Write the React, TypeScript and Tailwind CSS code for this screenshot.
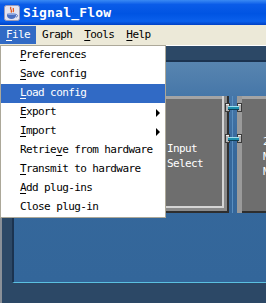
import React from "react";

interface MenuItem {
  label: React.ReactNode;
  sub?: boolean;
  active?: boolean;
}

const mono = "font-['DejaVu_Sans_Mono',monospace] text-[11px] tracking-[-0.6px]";

const U = ({ c }: { c: string }) => (
  <span className="underline underline-offset-[2px] decoration-1">{c}</span>
);

const fileItems: MenuItem[] = [
  { label: <><U c="P" />references</> },
  { label: <><U c="S" />ave config</> },
  { label: <><U c="L" />oad config</>, active: true },
  { label: <><U c="E" />xport</>, sub: true },
  { label: <><U c="I" />mport</>, sub: true },
  { label: <>Retrie<U c="v" />e from hardware</> },
  { label: <><U c="T" />ransmit to hardware</> },
  { label: <><U c="A" />dd plug-ins</> },
  { label: <>Close plug-in</> },
];

const JavaIcon = () => (
  <svg width="16" height="16" viewBox="0 0 16 16">
    <rect x="0.5" y="0.5" width="15" height="15" rx="2" fill="#e4e4f0" stroke="#9a9ab8" />
    <path d="M7 2 C5 4 9 5 7 7.5 M9.5 3 C8.5 4.5 10.5 5 9 7" stroke="#e0561c" strokeWidth="1.3" fill="none" />
    <path d="M3 9 h9 v1.5 c0 2 -2 3.5 -4.5 3.5 s-4.5 -1.5 -4.5 -3.5 z" fill="#4a6fc0" />
    <path d="M12 9.5 c2 0 2 2.5 0 2.5" stroke="#4a6fc0" strokeWidth="1" fill="none" />
    <ellipse cx="7.5" cy="9" rx="4.5" ry="1" fill="#8fa8e0" />
  </svg>
);

// little pin pair joining two blocks
const Connector = ({ top }: { top: number }) => (
  <svg
    width="17"
    height="9"
    viewBox="0 0 17 9"
    className="absolute left-[211px]"
    style={{ top }}
  >
    <rect x="0.5" y="0.5" width="4" height="8" fill="#b4b4b4" stroke="#3a3a3a" />
    <rect x="12.5" y="0.5" width="4" height="8" fill="#b4b4b4" stroke="#3a3a3a" />
    <rect x="1" y="1" width="3" height="1" fill="#f0f0f0" />
    <rect x="13" y="1" width="3" height="1" fill="#f0f0f0" />
    <rect x="3" y="3" width="11" height="3" fill="#1e8fae" />
    <rect x="3" y="3" width="11" height="1" fill="#9fe0ee" />
    <rect x="3" y="6" width="11" height="1" fill="#0c3f56" />
  </svg>
);

export default function App() {
  return (
    <div className="relative w-[266px] h-[303px] overflow-hidden flex flex-col bg-[#2c4866]">
      {/* title bar */}
      <div className="h-[25px] flex items-center pl-[4px] gap-[3px] bg-[linear-gradient(#3a8af4_0%,#0a5ce8_18%,#0054e3_55%,#0a60ec_85%,#0040c4_100%)]">
        <JavaIcon />
        <span className="font-['DejaVu_Sans_Mono',monospace] font-bold text-[13px] tracking-[0.2px] text-white">
          Signal_Flow
        </span>
      </div>

      {/* menu bar */}
      <div className={`h-[21px] flex items-start pt-[1px] bg-[#ece9d8] border-b border-white text-black ${mono}`}>
        <div className="h-[18px] px-[6px] flex items-center bg-[#316ac5] text-white">
          <U c="F" />ile
        </div>
        <div className="h-[18px] px-[6px] flex items-center">Graph</div>
        <div className="h-[18px] px-[6px] flex items-center">
          <U c="T" />ools
        </div>
        <div className="h-[18px] px-[6px] flex items-center">
          <U c="H" />elp
        </div>
      </div>

      {/* workspace */}
      <div className="flex-1 flex flex-col border-l-2 border-[#8a9098] pl-[10px] pt-[14px] pb-[20px]">
        <div className="relative flex-1 border-l-2 border-t-2 border-[#1b3350] border-b border-b-[#5bc0e0] bg-[linear-gradient(#5885b0_0px,#4576a8_36px,#36689b_90px,#33669a_100%)]">
          {/* block 1 */}
          <div className="absolute left-[116px] top-[34px] w-[99px] h-[117px] bg-[#6e6e6e] shadow-[inset_-2px_-2px_0_#2e2e2e,inset_-5px_-5px_0_#8a8a8a,inset_-7px_-7px_0_#d4d4d4,inset_0_3px_0_#a4a4a4]">
            <div className={`pl-[37px] pt-[45px] leading-[15px] text-white ${mono}`}>
              <div>Input</div>
              <div>Select</div>
            </div>
          </div>

          {/* gap line */}
          <div className="absolute left-[218px] top-[34px] w-[1px] h-[117px] bg-[#5a8fc0]" />

          {/* block 2 */}
          <div className="absolute left-[223px] top-[34px] w-[70px] h-[117px] bg-[#6e6e6e] shadow-[inset_5px_0_0_#9a9a9a,inset_0_3px_0_#a4a4a4,inset_0_-2px_0_#2e2e2e]">
            <div className={`pl-[26px] pt-[38px] leading-[15px] text-white ${mono}`}>
              <div>2</div>
              <div>M</div>
              <div>M</div>
            </div>
          </div>

          <Connector top={41} />
          <Connector top={72} />
        </div>
      </div>

      {/* File dropdown */}
      <div className={`absolute left-0 top-[45px] w-[166px] bg-white border border-[#aca899] text-black ${mono}`}>
        {fileItems.map((item, i) => (
          <div
            key={i}
            className={`h-[19px] pl-[19px] flex items-center ${item.active ? "bg-[#316ac5] text-white" : ""}`}
          >
            <span>{item.label}</span>
            {item.sub && (
              <span className="ml-auto mr-[5px] w-0 h-0 border-y-[4px] border-y-transparent border-l-[4px] border-l-black" />
            )}
          </div>
        ))}
      </div>
    </div>
  );
}
